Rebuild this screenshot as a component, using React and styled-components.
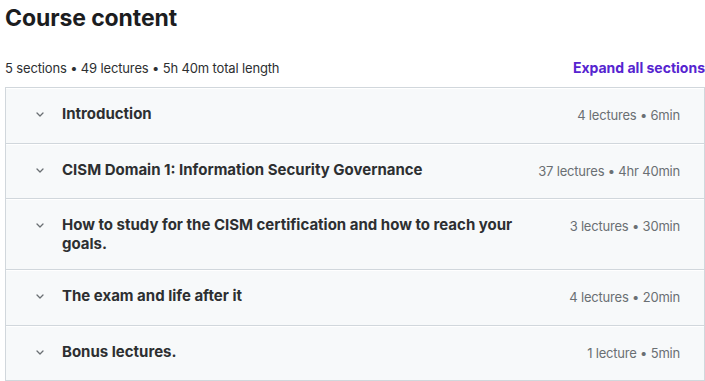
import styled, { createGlobalStyle } from "styled-components";

const GlobalStyle = createGlobalStyle`
  body {
    margin: 0;
    background: #fff;
    font-family: Inter, "Noto Sans", sans-serif;
    color: #2d2f31;
  }
`;

const sections = [
  { title: "Introduction", meta: "4 lectures • 6min" },
  { title: "CISM Domain 1: Information Security Governance", meta: "37 lectures • 4hr 40min" },
  {
    title: "How to study for the CISM certification and how to reach your goals.",
    meta: "3 lectures • 30min",
  },
  { title: "The exam and life after it", meta: "4 lectures • 20min" },
  { title: "Bonus lectures.", meta: "1 lecture • 5min" },
];

const Wrapper = styled.div`
  width: 700px;
  padding-left: 5px;
`;

const Heading = styled.h2`
  margin: 0;
  padding-top: 4px;
  font-size: 23px;
  line-height: 28px;
  font-weight: 700;
  letter-spacing: -0.1px;
  color: #1c1d1f;
`;

const Summary = styled.div`
  display: flex;
  justify-content: space-between;
  align-items: center;
  margin-top: 27px;
  margin-bottom: 10px;
  font-size: 13px;
  line-height: 18px;
`;

const Stats = styled.span`
  color: #2d2f31;
  letter-spacing: -0.15px;
`;

const ExpandLink = styled.button`
  all: unset;
  cursor: pointer;
  color: #5624d0;
  font-weight: 700;
  font-size: 14px;
`;

const Accordion = styled.div`
  border: 1px solid #d1d7dc;
  border-bottom: none;
`;

const Row = styled.div`
  display: flex;
  align-items: flex-start;
  min-height: 55.5px;
  box-sizing: border-box;
  padding: 16px 24px 16px 28px;
  background: #f7f9fa;
  border-bottom: 1px solid #d1d7dc;
  box-shadow: inset 0 1px 0 #fff;
`;

const Chevron = styled.svg`
  flex: none;
  width: 12px;
  height: 12px;
  margin-right: 16px;
  margin-top: 4px;
  color: #6a6f73;
`;

const Title = styled.div`
  flex: 1;
  font-size: 15px;
  line-height: 19px;
  font-weight: 700;
  padding-right: 40px;
`;

const Meta = styled.div`
  flex: none;
  margin-top: 2px;
  font-size: 13px;
  line-height: 19px;
  letter-spacing: -0.2px;
  color: #6a6f73;
`;

function Section({ title, meta }) {
  return (
    <Row>
      <Chevron viewBox="0 0 12 12" fill="none">
        <path d="M3 5l3 3 3-3" stroke="currentColor" strokeWidth="1.3" strokeLinecap="round" strokeLinejoin="round" />
      </Chevron>
      <Title>{title}</Title>
      <Meta>{meta}</Meta>
    </Row>
  );
}

export default function App() {
  return (
    <>
      <GlobalStyle />
      <Wrapper>
        <Heading>Course content</Heading>
        <Summary>
          <Stats>5 sections • 49 lectures • 5h 40m total length</Stats>
          <ExpandLink>Expand all sections</ExpandLink>
        </Summary>
        <Accordion>
          {sections.map((s) => (
            <Section key={s.title} {...s} />
          ))}
        </Accordion>
      </Wrapper>
    </>
  );
}
